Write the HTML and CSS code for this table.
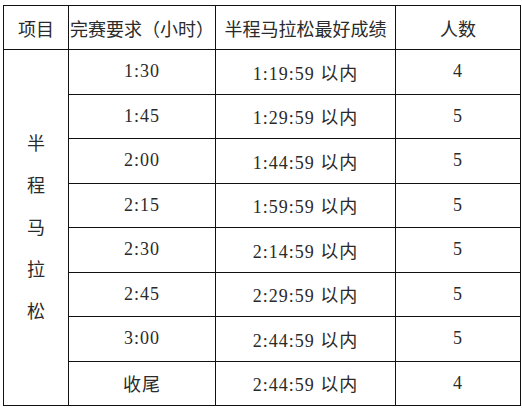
FILE: index.html
```html
<!DOCTYPE html>
<html lang="zh-CN">
<head>
<meta charset="utf-8">
<title>半程马拉松</title>
<link rel="stylesheet" href="styles.css">
</head>
<body>
<table class="grid">
  <colgroup>
    <col class="c1">
    <col class="c2">
    <col class="c3">
    <col class="c4">
  </colgroup>
  <thead>
    <tr class="head">
      <th>项目</th>
      <th>完赛要求（小时）</th>
      <th>半程马拉松最好成绩</th>
      <th>人数</th>
    </tr>
  </thead>
  <tbody>
    <tr>
      <td rowspan="8" class="event"><span class="vert">半程马拉松</span></td>
      <td>1:30</td><td>1:19:59 以内</td><td>4</td>
    </tr>
    <tr><td>1:45</td><td>1:29:59 以内</td><td>5</td></tr>
    <tr><td>2:00</td><td>1:44:59 以内</td><td>5</td></tr>
    <tr><td>2:15</td><td>1:59:59 以内</td><td>5</td></tr>
    <tr><td>2:30</td><td>2:14:59 以内</td><td>5</td></tr>
    <tr><td>2:45</td><td>2:29:59 以内</td><td>5</td></tr>
    <tr><td>3:00</td><td>2:44:59 以内</td><td>5</td></tr>
    <tr><td>收尾</td><td>2:44:59 以内</td><td>4</td></tr>
  </tbody>
</table>
</body>
</html>
```
FILE: styles.css
```css
html, body {
  margin: 0;
  background: #ffffff;
}
body {
  padding: 5px 3px;
  font-family: "Liberation Serif", "Noto Sans CJK SC", serif;
  color: #2a2a2a;
}
.grid {
  border-collapse: collapse;
  table-layout: fixed;
  width: 517px;
}
.c1 { width: 65px; }
.c2 { width: 147px; }
.c3 { width: 180px; }
.c4 { width: 125px; }
.grid th,
.grid td {
  border: 1px solid #111;
  padding: 0;
  text-align: center;
  vertical-align: middle;
  font-size: 18px;
  font-weight: normal;
  white-space: nowrap;
}
.grid td {
  letter-spacing: 1px;
}
.head {
  height: 44px;
}
.grid tbody tr {
  height: 44.5px;
}
.grid th {
  letter-spacing: 0;
}
.event {
  white-space: normal;
}
.vert {
  display: block;
  width: 18px;
  margin: 0 auto;
  line-height: 42px;
  letter-spacing: 0;
  word-break: break-all;
  white-space: normal;
}
```
